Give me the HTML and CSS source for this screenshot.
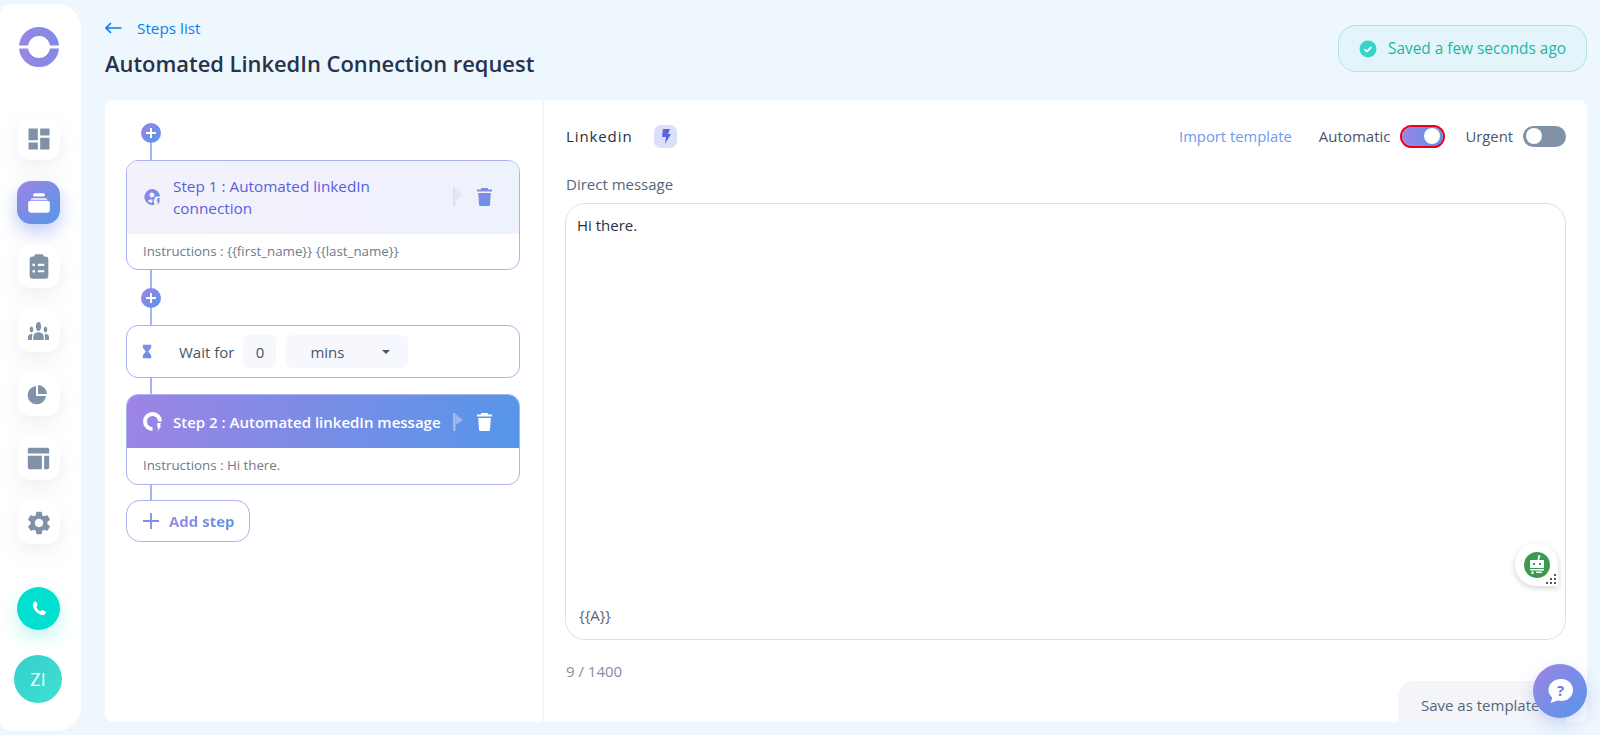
FILE: index.html
```html
<!DOCTYPE html>
<html lang="en">
<head>
<meta charset="utf-8">
<title>Automated LinkedIn Connection request</title>
<link rel="stylesheet" href="styles.css">
</head>
<body>
<svg class="defs" width="0" height="0"><defs>
<linearGradient id="grad" x1="0" y1="0" x2="1" y2="1"><stop offset="0" stop-color="#9d84e5"/><stop offset="1" stop-color="#5596e8"/></linearGradient>
<linearGradient id="gradh" gradientUnits="userSpaceOnUse" x1="0" y1="0" x2="40" y2="0"><stop offset="0" stop-color="#9d84e5"/><stop offset="1" stop-color="#7d8ce6"/></linearGradient>
</defs></svg>
<aside class="sidebar">
  <div class="logo"><svg width="40" height="40" viewBox="0 0 40 40"><circle cx="20" cy="20" r="15.500" fill="none" stroke="url(#gradh)" stroke-width="9"/><path fill="#fff" d="M0 18.500h11v3H0zM29 18.500h11v3H29z"/></svg></div>
  <nav class="nav">
    <a class="nav-item"><svg width="28" height="28" viewBox="0 0 24 24"><path d="M3 13h8V3H3v10zm0 8h8v-6H3v6zm10 0h8V11h-8v10zm0-18v6h8V3h-8z"/></svg></a>
    <a class="nav-item active"><svg width="26" height="26" viewBox="0 0 24 24"><path d="M8 3h8a1.500 1.500 0 0 1 0 3H8a1.500 1.500 0 0 1 0-3zM6 7.500h12a2 2 0 0 1 1.800 1.500H4.200A2 2 0 0 1 6 7.500zM4.500 10h15A2.500 2.500 0 0 1 22 12.500V18a3 3 0 0 1-3 3H5a3 3 0 0 1-3-3v-5.500A2.500 2.500 0 0 1 4.500 10z"/></svg></a>
    <a class="nav-item"><svg width="28" height="28" viewBox="0 0 24 24"><path fill-rule="evenodd" d="M9.500 1h5A1.500 1.500 0 0 1 16 2.500V3h1.500A2.500 2.500 0 0 1 20 5.500v14a2.500 2.500 0 0 1-2.500 2.500h-11A2.500 2.500 0 0 1 4 19.500v-14A2.500 2.500 0 0 1 6.500 3H8v-.5A1.500 1.500 0 0 1 9.500 1zM7.500 9a1.200 1.200 0 1 0 0 2.400 1.200 1.200 0 0 0 0-2.400zm3.500.3v1.800h5.500V9.300zM7.500 14.500a1.200 1.200 0 1 0 0 2.400 1.200 1.200 0 0 0 0-2.400zm3.500.3v1.800h5.500v-1.800z"/></svg></a>
    <a class="nav-item"><svg width="21" height="18" viewBox="0 6 24 12" preserveAspectRatio="none"><path d="M12 12.750c1.630 0 3.070.39 4.240.9 1.080.48 1.760 1.560 1.760 2.730V18H6v-1.610c0-1.180.68-2.260 1.760-2.730 1.170-.52 2.610-.91 4.240-.91zM4 13c1.100 0 2-.9 2-2s-.9-2-2-2-2 .9-2 2 .9 2 2 2zm1.130 1.100C4.760 14.040 4.390 14 4 14c-.99 0-1.930.21-2.780.58C.48 14.900 0 15.620 0 16.430V18h4.500v-1.610c0-.83.23-1.610.63-2.290zM20 13c1.100 0 2-.9 2-2s-.9-2-2-2-2 .9-2 2 .9 2 2 2zm4 3.430c0-.81-.48-1.530-1.220-1.850C21.930 14.210 20.990 14 20 14c-.39 0-.76.04-1.130.1.4.68.63 1.460.63 2.290V18H24v-1.570zM12 6c1.660 0 3 1.340 3 3s-1.340 3-3 3-3-1.340-3-3 1.340-3 3-3z"/></svg></a>
    <a class="nav-item"><svg class="ic-pie" width="24" height="24" viewBox="0 0 24 24"><path d="M11 3a9.200 9.200 0 1 0 10 10H11zM13 2v9h9a9.200 9.200 0 0 0-9-9z"/></svg></a>
    <a class="nav-item"><svg width="27" height="27" viewBox="0 0 24 24"><path d="M4 2.500h16A1.500 1.500 0 0 1 21.500 4v3.500h-19V4A1.500 1.500 0 0 1 4 2.500zM2.500 9.500H15v12H4A1.500 1.500 0 0 1 2.500 20zM17 9.500h4.500V20a1.500 1.500 0 0 1-1.500 1.500h-3z"/></svg></a>
    <a class="nav-item"><svg width="28" height="28" viewBox="0 0 24 24"><path d="M19.140 12.940c.04-.3.06-.61.06-.94 0-.32-.02-.64-.07-.94l2.030-1.580a.49.49 0 0 0 .12-.61l-1.920-3.320a.488.488 0 0 0-.59-.22l-2.390.96c-.5-.38-1.030-.7-1.620-.94l-.36-2.540a.484.484 0 0 0-.48-.41h-3.840c-.24 0-.43.17-.47.41l-.36 2.540c-.59.24-1.130.57-1.620.94l-2.390-.96c-.22-.08-.47 0-.59.22L2.740 8.870c-.12.21-.08.47.12.61l2.030 1.580c-.05.3-.09.63-.09.94s.02.64.07.94l-2.030 1.580a.49.49 0 0 0-.12.61l1.920 3.320c.12.22.37.29.59.22l2.390-.96c.5.38 1.030.7 1.620.94l.36 2.540c.05.24.24.41.48.41h3.840c.24 0 .44-.17.47-.41l.36-2.540c.59-.24 1.130-.56 1.620-.94l2.390.96c.22.08.47 0 .59-.22l1.920-3.320c.12-.22.07-.47-.12-.61l-2.010-1.580zM12 15.600c-1.980 0-3.600-1.620-3.600-3.600s1.620-3.600 3.600-3.600 3.600 1.620 3.600 3.600-1.620 3.600-3.600 3.600z"/></svg></a>
  </nav>
  <a class="phone"><svg width="20" height="20" viewBox="0 0 24 24"><path d="M6.500 3.200c1.100-.6 2.100-.2 2.600.9l1 2.200c.4.800.2 1.500-.4 2.100l-1 1c.9 2.300 2.700 4.300 5 5.500l1-1c.6-.6 1.400-.7 2.100-.3l2.300 1.200c1.100.6 1.400 1.600.7 2.700-1 1.500-2.600 2.300-4.500 1.700C9.900 17.800 6 13.500 4.700 8.300 4.300 6.300 5 4.300 6.500 3.200z"/></svg></a>
  <a class="avatar">ZI</a>
</aside>

<main class="content">
  <header class="topbar">
    <div class="titles">
      <a class="back"><svg width="17" height="12" viewBox="0 0 17 12"><path d="M6 1 1 6l5 5M1 6h15.500" fill="none" stroke="#0a7cf5" stroke-width="1.600"/></svg><span>Steps list</span></a>
      <h1 class="title">Automated LinkedIn Connection request</h1>
    </div>
    <div class="saved"><svg width="18" height="18" viewBox="0 0 18 18"><circle cx="9" cy="9" r="8.500" fill="#35d6c9"/><path d="m5.500 9.300 2.400 2.300 4.500-4.600" fill="none" stroke="#fff" stroke-width="1.800"/></svg><span>Saved a few seconds ago</span></div>
  </header>

  <section class="panel">
    <div class="steps">
      <span class="add-dot"><svg width="12" height="12" viewBox="0 0 12 12"><path d="M6 1v10M1 6h10" stroke="#fff" stroke-width="2"/></svg></span>
      <i class="line l-first"></i>
      <article class="card">
        <div class="card-head light">
          <svg class="step-ic" width="18" height="18" viewBox="0 0 18 18"><path fill="url(#grad)" fill-rule="evenodd" d="M9 1a8 8 0 0 1 8 7.500h-4.500L10.500 13l1 3.700A8 8 0 1 1 9 1zm0 3.500a2.500 2.500 0 1 0 0 5 2.500 2.500 0 0 0 0-5zM4.800 13c1 1.200 2.400 1.800 4.200 1.800l.7-3.300H8c-1.400 0-2.500.5-3.200 1.500z"/><path fill="url(#grad)" d="M14.500 10h2.500l-1 2.500h1.300L14.500 17l.3-3.500h-1.100z"/></svg>
          <h2 class="step-title">Step 1 : Automated linkedIn connection</h2>
          <svg class="flag" width="14" height="18" viewBox="0 0 14 18"><path fill="#dcdff8" d="M2 0h2.500v18H2z"/><path fill="#e3e5fa" d="M4.500 1l7.500 6-7.500 5z"/></svg>
          <svg class="trash" width="17" height="20" viewBox="0 0 17 20"><path fill="url(#grad)" d="M5.500 1h6l1 1.500H16v2H1v-2h3.500zM2.200 6h12.600l-.8 11.500a1.500 1.500 0 0 1-1.500 1.500H4.500A1.500 1.500 0 0 1 3 17.500z"/></svg>
        </div>
        <p class="card-body">Instructions : {{first_name}} {{last_name}}</p>
      </article>
      <i class="line l-a"></i>
      <span class="add-dot"><svg width="12" height="12" viewBox="0 0 12 12"><path d="M6 1v10M1 6h10" stroke="#fff" stroke-width="2"/></svg></span>
      <i class="line l-b"></i>
      <article class="card wait">
        <svg class="hour" width="10" height="15" viewBox="0 0 12 16"><path fill="url(#grad)" d="M1 0h10v3.500L7.500 8 11 12.500V16H1v-3.500L4.500 8 1 3.500z"/></svg>
        <span class="wait-label">Wait for</span>
        <span class="wait-num">0</span>
        <span class="wait-select"><span>mins</span><i class="caret"></i></span>
      </article>
      <i class="line l-c"></i>
      <article class="card">
        <div class="card-head dark">
          <svg class="step-ic dark-ic" width="20" height="20" viewBox="0 0 20 20"><path fill="none" stroke="#fff" stroke-width="4" d="M17 9.500A7.500 7.500 0 1 0 9.500 17"/><path fill="#fff" d="M14.500 11H18l-1.200 2.700h1.400L14.800 19l.4-3.800H14z"/></svg>
          <h2 class="step-title">Step 2 : Automated linkedIn message</h2>
          <svg class="flag" width="14" height="18" viewBox="0 0 14 18"><path fill="#a8b9f0" d="M2 0h2.500v18H2z"/><path fill="#9db3f0" d="M4.500 1l7.500 6-7.500 5z"/></svg>
          <svg class="trash" width="17" height="20" viewBox="0 0 17 20"><path fill="#fff" d="M5.500 1h6l1 1.500H16v2H1v-2h3.500zM2.200 6h12.600l-.8 11.500a1.500 1.500 0 0 1-1.500 1.500H4.500A1.500 1.500 0 0 1 3 17.500z"/></svg>
        </div>
        <p class="card-body">Instructions : Hi there.</p>
      </article>
      <i class="line l-d"></i>
      <a class="add-step"><svg width="16" height="16" viewBox="0 0 16 16"><path d="M8 0v16M0 8h16" stroke="#7f8fe8" stroke-width="1.800"/></svg><span>Add step</span></a>
    </div>

    <div class="editor">
      <div class="editor-top">
        <span class="channel">Linkedin</span>
        <span class="bolt"><svg width="10" height="15" viewBox="0 0 10 15"><path fill="#5a63dd" d="M2 0h7L7 5h3L4 15l1-7H1z"/></svg></span>
        <a class="import">Import template</a>
        <span class="tg-label auto">Automatic</span>
        <span class="toggle on"><i></i></span>
        <span class="tg-label urgent">Urgent</span>
        <span class="toggle"><i></i></span>
      </div>
      <label class="field-label">Direct message</label>
      <div class="msg">
        <p class="msg-text">Hi there.</p>
        <p class="msg-var">{{A}}</p>
        <span class="bot">
          <svg width="26" height="26" viewBox="0 0 26 26"><circle cx="13" cy="13" r="13" fill="#3b9a50"/><path fill="#fff" d="M14.500 3l2 .5-1.500 4.500h-1.500zM6 8h14v8H6zM6 17h14v1.500H6zM7.500 19.500h2V22h-2zM12 19.500h6V21h-6z"/><rect x="9" y="11" width="2" height="2" fill="#3b9a50"/><rect x="15" y="11" width="2" height="2" fill="#3b9a50"/></svg>
          <svg class="grip" width="11" height="11" viewBox="0 0 11 11"><path fill="#555" d="M8 0h2v2H8zM4 4h2v2H4zM8 4h2v2H8zM0 8h2v2H0zM4 8h2v2H4zM8 8h2v2H8z"/></svg>
        </span>
      </div>
      <div class="count">9 / 1400</div>
      <div class="actions"><a class="btn-save">Save as template</a></div>
    </div>
  </section>
</main>

<a class="help"><svg width="32" height="32" viewBox="0 0 32 32"><path fill="#fff" d="M17 4c7 0 12 4.800 12 11s-5 11-12 11c-1.200 0-2.300-.1-3.300-.4L6.500 28l1.800-5.200C5.800 20.700 4.500 18 4.500 15 4.500 8.800 10 4 17 4z"/><text x="16.500" y="20.500" class="help-q">?</text></svg></a>
</body>
</html>
```
FILE: styles.css
```css
* { box-sizing: border-box; }
html, body { height: 100%; }
body {
  margin: 0;
  height: 735px;
  overflow: hidden;
  display: flex;
  background: #eef6fe;
  font-family: "Open Sans", "Noto Sans", sans-serif;
  color: #2a3547;
}
.defs { position: absolute; }
p, h1, h2 { margin: 0; }
i { display: block; font-style: normal; }
a { display: block; }

.sidebar {
  width: 81px;
  height: 727px;
  margin-top: 4px;
  flex: none;
  background: #fff;
  border-radius: 10px 24px 24px 10px;
  display: flex;
  flex-direction: column;
  align-items: center;
  padding-right: 4px;
}
.logo { height: 40px; margin-top: 23px; }
.nav { display: flex; flex-direction: column; gap: 21px; margin-top: 50px; }
.nav-item {
  width: 43px; height: 43px;
  background: #fff;
  border-radius: 14px;
  display: flex; align-items: center; justify-content: center;
  box-shadow: 0 8px 20px rgba(130, 140, 160, .13);
  fill: #8192a8;
}
.nav-item.active {
  background: linear-gradient(135deg, #9d84e5, #5596e8);
  fill: #fff;
  box-shadow: 0 8px 18px rgba(100, 130, 230, .4);
}
.ic-pie { margin-left: -3px; }
.phone {
  width: 43px; height: 43px;
  margin-top: 43px;
  border-radius: 50%;
  background: #00dfd0;
  fill: #fff;
  display: flex; align-items: center; justify-content: center;
  box-shadow: 0 8px 18px rgba(0, 223, 208, .25);
}
.avatar {
  width: 48px; height: 48px;
  margin-top: 25px;
  margin-left: -1px;
  border-radius: 50%;
  background: linear-gradient(135deg, #35cfcf, #3fe0cf);
  color: #fff;
  font-size: 18px;
  display: flex; align-items: center; justify-content: center;
}

.content { flex: 1; min-width: 0; padding: 0 13px 0 24px; display: flex; flex-direction: column; }
.topbar { height: 100px; display: flex; justify-content: space-between; align-items: flex-start; }
.titles { padding-top: 17px; }
.back { display: flex; align-items: center; gap: 15px; color: #0a7cf5; font-size: 15.300px; line-height: 22px; }
.title { font-size: 21.900px; line-height: 30px; font-weight: 600; color: #26334a; margin-top: 10px; }
.saved {
  margin-top: 25px;
  width: 249px; height: 47px;
  border: 1px solid #a9e7e7;
  border-radius: 18px;
  background: #e3f5fa;
  color: #1cb5a6;
  font-size: 15.400px;
  display: flex; align-items: center; gap: 11px;
  padding-left: 20px;
}

.panel {
  height: 622px;
  background: #fff;
  border-radius: 8px;
  display: flex;
  overflow: hidden;
}
.steps {
  width: 439px;
  flex: none;
  border-right: 2px solid #f0f6fe;
  padding: 23px 0 0 21px;
  display: flex;
  flex-direction: column;
  align-items: flex-start;
}
.add-dot {
  width: 20px; height: 20px;
  margin-left: 15px;
  border-radius: 50%;
  background: linear-gradient(135deg, #9d84e5, #5596e8);
  display: flex; align-items: center; justify-content: center;
}
.line { width: 2px; margin-left: 24px; background: #a9b3f0; }
.l-first { height: 17px; }
.l-a { height: 18px; }
.l-b { height: 17px; }
.l-c { height: 16px; }
.l-d { height: 15px; }
.card {
  width: 394px;
  border: 1px solid #aab3ee;
  border-radius: 12px;
  overflow: hidden;
  background: #fff;
}
.card-head { display: flex; align-items: center; padding: 0 26px 0 16px; }
.card-head.light { height: 73px; padding-bottom: 2px; background: linear-gradient(90deg, #f3f1fc, #eef2fc); color: #5a5fdc; }
.card-head.dark { height: 53px; background: linear-gradient(100deg, #9d84e5, #5596e8); color: #fff; }
.step-ic { flex: none; margin-right: 12px; }
.dark-ic { margin-right: 10px; }
.step-title { flex: 1; font-size: 15.300px; line-height: 22px; font-weight: 400; }
.dark .step-title { font-size: 15px; font-weight: 600; white-space: nowrap; }
.flag { flex: none; margin: 0 11px 0 8px; }
.card-body { padding-left: 16px; height: 35px; line-height: 35px; font-size: 13.300px; color: #6f7a8c; }
.dark + .card-body { height: 36px; }
.wait {
  height: 53px;
  display: flex; align-items: center;
  padding-left: 15px;
  font-size: 15px;
  color: #4a5568;
}
.wait-label { margin-left: 27px; }
.wait-num {
  width: 33px; height: 33px;
  margin-left: 9px;
  border-radius: 6px;
  background: #f6f8fd;
  display: flex; align-items: center; justify-content: center;
}
.wait-select {
  width: 122px; height: 33px;
  margin-left: 10px;
  border-radius: 6px;
  background: #f6f8fd;
  display: flex; align-items: center; justify-content: space-between;
  padding: 0 18px 0 24px;
}
.caret { width: 0; height: 0; border: 4px solid transparent; border-top: 4px solid #4a5568; border-bottom: 0; }
.add-step {
  width: 124px; height: 42px;
  border: 1px solid #aab3ee;
  border-radius: 14px;
  display: flex; align-items: center; gap: 10px;
  padding-left: 16px;
  font-size: 15px; font-weight: 700;
  background: #fff;
}
.add-step span {
  background: linear-gradient(90deg, #9d84e5, #5596e8);
  -webkit-background-clip: text; background-clip: text;
  color: transparent;
}

.editor { flex: 1; min-width: 0; padding: 0 21px 0 22px; }
.editor-top { height: 72px; display: flex; align-items: center; font-size: 14.800px; margin-bottom: 3px; }
.channel { font-weight: 500; font-size: 15px; color: #27303f; letter-spacing: .9px; }
.bolt {
  width: 23px; height: 23px;
  margin-left: 22px;
  border-radius: 7px;
  background: #dcdffa;
  display: flex; align-items: center; justify-content: center;
}
.import { margin-left: auto; color: #6f9aef; font-size: 14.800px; }
.tg-label { color: #4a5568; }
.auto { margin-left: 27px; font-size: 15px; }
.urgent { margin-left: 22px; }
.toggle {
  width: 43px; height: 21px;
  margin-left: 10px;
  border-radius: 11px;
  background: #8192a8;
  display: flex; align-items: center;
  padding: 0 3px;
}
.toggle i { width: 16px; height: 16px; border-radius: 50%; background: #fff; }
.toggle.on {
  width: 41px; height: 19px;
  margin-left: 12px;
  justify-content: flex-end;
  background: linear-gradient(90deg, #9d84e5, #5596e8);
  outline: 2px solid #e8001e;
  outline-offset: 0;
}
.field-label { display: block; font-size: 15px; line-height: 20px; color: #56657c; margin-top: -1px; }
.msg {
  position: relative;
  height: 437px;
  margin-top: 9px;
  margin-left: -1px;
  border: 1px solid #dde0e8;
  border-radius: 20px;
  display: flex; flex-direction: column; justify-content: space-between;
  padding: 10px 11px 13px;
  font-size: 15px;
}
.msg-text { line-height: 22px; color: #27303f; }
.msg-var { line-height: 22px; margin-left: 2px; color: #56657c; }
.bot {
  position: absolute;
  right: 7px; bottom: 53px;
  width: 43px; height: 43px;
  background: #fff;
  border-radius: 50% 50% 0 50%;
  display: flex; align-items: center; justify-content: center;
  box-shadow: 0 2px 6px rgba(0, 0, 0, .18);
}
.grip { position: absolute; right: 1px; bottom: 1px; }
.count { margin-top: 20px; font-size: 15px; line-height: 22px; color: #7f8fa4; }
.actions { display: flex; justify-content: flex-end; }
.btn-save {
  width: 168px; height: 60px;
  margin-top: -1px;
  background: #f4f5f8;
  border-radius: 16px;
  color: #56657c;
  font-size: 15px;
  padding: 14px 0 0 23px;
}
.help {
  position: absolute;
  left: 1533px; top: 664px;
  width: 54px; height: 54px;
  border-radius: 50%;
  background: linear-gradient(135deg, #9d84e5, #5596e8);
  display: flex; align-items: center; justify-content: center;
  box-shadow: 0 6px 16px rgba(100, 130, 230, .3);
}
.help-q { font-size: 15px; font-weight: 700; fill: #6a78e0; text-anchor: middle; }
```
